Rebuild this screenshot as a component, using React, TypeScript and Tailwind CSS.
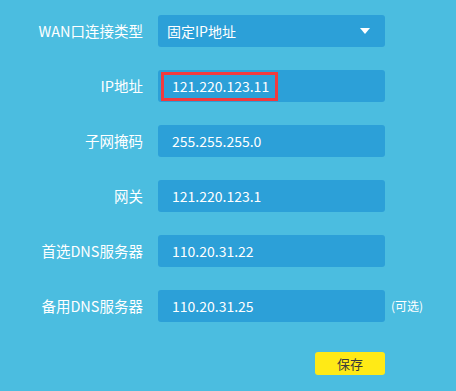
import React from "react";

const font = { fontFamily: '"Microsoft YaHei", "Noto Sans CJK SC", "Noto Sans", sans-serif' };

function Row({ label, children, extra }: { label: string; children: React.ReactNode; extra?: React.ReactNode }) {
  return (
    <div className="flex items-center h-[32px]">
      <div className="w-[143px] text-right text-white text-[14.5px] leading-none">{label}</div>
      <div className="ml-[15px] w-[227px] h-[32px] rounded-[3px] bg-[#2ca0d8] flex items-center relative">
        {children}
      </div>
      {extra}
    </div>
  );
}

export default function App() {
  return (
    <div className="w-[456px] h-[391px] bg-[#4bbde0] overflow-hidden" style={font}>
      <div className="pt-[15px] flex flex-col gap-[23px]">
        <Row label="WAN口连接类型">
          <span className="pl-[9px] text-white text-[14px]">固定IP地址</span>
          <svg className="absolute left-[202px] top-[13px]" width="10" height="6" viewBox="0 0 10 6">
            <polygon points="0,0 10,0 5,6" fill="#ffffff" />
          </svg>
        </Row>
        <Row label="IP地址">
          <div className="ml-[3px] w-[117px] h-[29px] border-[3px] border-[#f13a3e] flex items-center pl-[8px]">
            <span className="text-white text-[14px]">121.220.123.11</span>
          </div>
        </Row>
        <Row label="子网掩码">
          <span className="pl-[14px] text-white text-[14px]">255.255.255.0</span>
        </Row>
        <Row label="网关">
          <span className="pl-[14px] text-white text-[14px]">121.220.123.1</span>
        </Row>
        <Row label="首选DNS服务器">
          <span className="pl-[14px] text-white text-[14px]">110.20.31.22</span>
        </Row>
        <Row
          label="备用DNS服务器"
          extra={<span className="ml-[6px] text-white text-[12px]">(可选)</span>}
        >
          <span className="pl-[14px] text-white text-[14px]">110.20.31.25</span>
        </Row>
      </div>
      <div className="mt-[30px] flex">
        <button className="ml-[315px] w-[70px] h-[23px] rounded-[3px] bg-[#ffea16] text-[#3a3a3a] text-[13px] flex items-center justify-center">
          保存
        </button>
      </div>
    </div>
  );
}
